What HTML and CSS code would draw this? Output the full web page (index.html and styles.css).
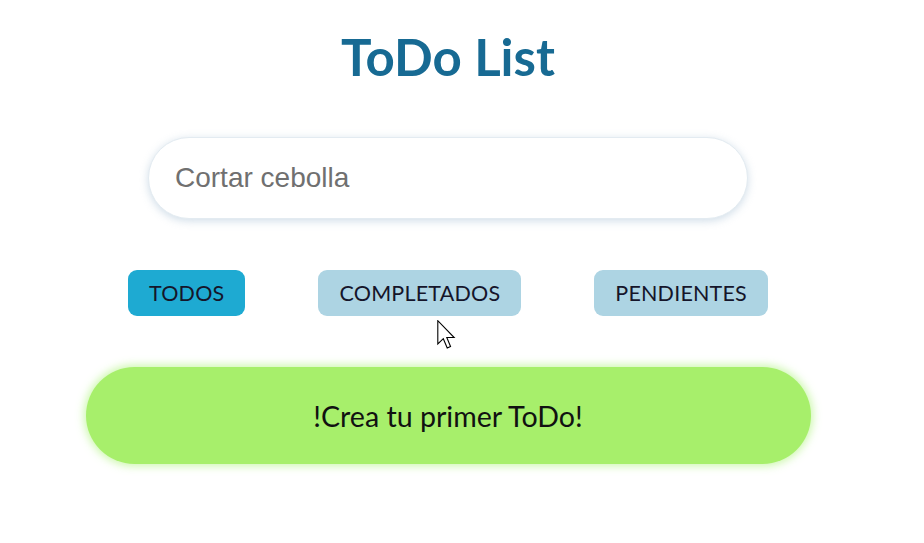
FILE: index.html
```html
<!DOCTYPE html>
<html lang="es">
<head>
<meta charset="utf-8">
<title>ToDo List</title>
<link rel="stylesheet" href="styles.css">
</head>
<body>
<main class="app">
  <h1 class="title">ToDo List</h1>
  <input class="search" type="text" placeholder="Cortar cebolla">
  <div class="filters">
    <button class="filter filter--active">TODOS</button>
    <button class="filter">COMPLETADOS</button>
    <button class="filter">PENDIENTES</button>
  </div>
  <button class="create">!Crea tu primer ToDo!</button>
</main>
<svg class="cursor" width="19" height="29" viewBox="0 0 13 20" xmlns="http://www.w3.org/2000/svg">
  <path d="M0.5 0.5 L0.5 16.5 L4.3 12.9 L7 19.3 L9.3 18.3 L6.7 12.1 L11.8 12.1 Z" fill="#fff" stroke="#000" stroke-width="0.75" stroke-linejoin="miter"/>
</svg>
</body>
</html>
```
FILE: styles.css
```css
html, body {
  margin: 0;
  padding: 0;
  background: #ffffff;
}

body {
  width: 924px;
  height: 543px;
  position: relative;
  overflow: hidden;
  font-family: "Lato", "Liberation Sans", sans-serif;
}

.app {
  width: 896px;
  display: flex;
  flex-direction: column;
  align-items: center;
}

.title {
  margin: 26px 0 0;
  font-size: 51px;
  line-height: 1.2;
  font-weight: 700;
  color: #176a93;
}

.search {
  box-sizing: border-box;
  margin-top: 50px;
  width: 600px;
  height: 82px;
  padding: 0 26px;
  border: 1px solid #e3ebf1;
  border-radius: 41px;
  background: #ffffff;
  box-shadow: 0 2px 8px rgba(150, 180, 205, 0.45);
  font-family: "Liberation Sans", Arial, sans-serif;
  font-size: 28px;
  color: #333;
  outline: none;
}

.search::placeholder {
  color: #707070;
}

.filters {
  margin-top: 51px;
  width: 640px;
  display: flex;
  justify-content: space-between;
}

.filter {
  height: 46px;
  padding: 0 21px;
  border: none;
  border-radius: 9px;
  background: #add4e3;
  font-family: "Lato", sans-serif;
  font-size: 21.5px;
  color: #15152a;
  letter-spacing: 0.2px;
  cursor: pointer;
}

.filter--active {
  background: #1eaad2;
}

.create {
  margin-top: 51px;
  width: 725px;
  height: 97px;
  border: none;
  border-radius: 49px;
  background: #a7ef6b;
  box-shadow: 0 0 8px 2px rgba(190, 245, 150, 0.8);
  font-family: "Lato", sans-serif;
  font-size: 28.6px;
  color: #111;
  cursor: pointer;
}

.cursor {
  position: absolute;
  left: 437px;
  top: 320px;
}
```
